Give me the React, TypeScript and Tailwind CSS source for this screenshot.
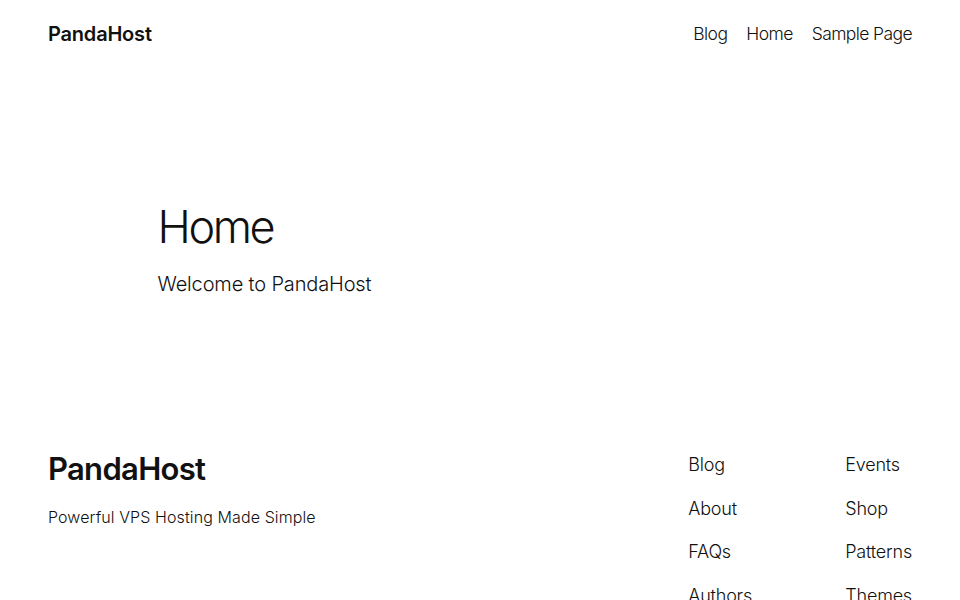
import React from 'react';

const headerLinks = ['Blog', 'Home', 'Sample Page'];
const footerCol1 = ['Blog', 'About', 'FAQs', 'Authors'];
const footerCol2 = ['Events', 'Shop', 'Patterns', 'Themes'];

export default function App() {
  return (
    <div className="min-h-screen bg-white text-[#111111] font-['Inter',sans-serif] font-light overflow-hidden">
      {/* header */}
      <header className="flex items-center justify-between px-12 h-[68px]">
        <a className="text-[20px] font-semibold tracking-[-0.2px]">PandaHost</a>
        <nav className="flex gap-[19px] text-[17.5px] tracking-[-0.6px]">
          {headerLinks.map(l => (
            <a key={l}>{l}</a>
          ))}
        </nav>
      </header>

      {/* main */}
      <main className="mx-auto w-[645px] pt-[132px] pb-[151px]">
        <h1 className="text-[45px] font-light leading-[1.2] tracking-[-2.4px]">Home</h1>
        <p className="mt-[15px] text-[20px] tracking-[-0.15px]">Welcome to PandaHost</p>
      </main>

      {/* footer */}
      <footer className="flex justify-between px-12">
        <div>
          <div className="text-[31px] font-semibold tracking-[-0.7px] leading-tight">PandaHost</div>
          <p className="mt-4 text-[16px] tracking-[0.1px]">Powerful VPS Hosting Made Simple</p>
        </div>
        <div className="flex text-[18px] tracking-[-0.2px] pt-[1px]">
          <ul className="w-[157px] flex flex-col gap-[16.5px]">
            {footerCol1.map(l => <li key={l}>{l}</li>)}
          </ul>
          <ul className="flex flex-col gap-[16.5px]">
            {footerCol2.map(l => <li key={l}>{l}</li>)}
          </ul>
        </div>
      </footer>
    </div>
  );
}
